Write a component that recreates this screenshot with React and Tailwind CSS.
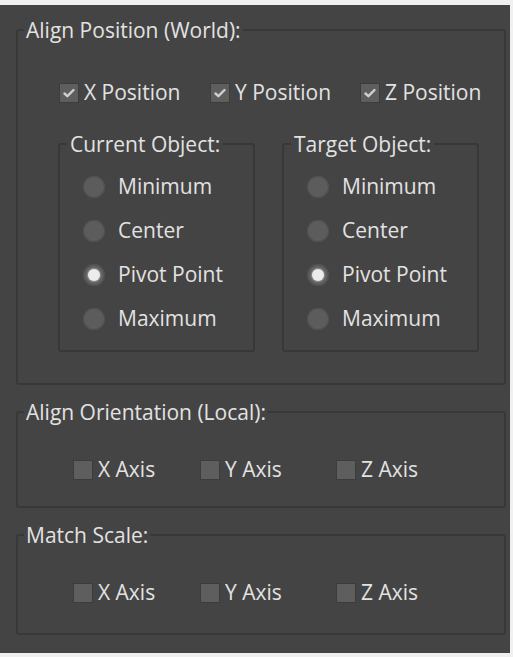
import React from "react";

function Check({ checked, label, className = "" }) {
  return (
    <div className={`flex items-center h-6 ${className}`}>
      <span className="flex h-5 w-5 items-center justify-center border border-[#3c3c3c] bg-[#5e5e5e]">
        {checked && (
          <svg width="14" height="12" viewBox="0 0 14 12">
            <path d="M2.5 6.5 L5.4 9.2 L11.5 3" fill="none" stroke="#cfcfcf" strokeWidth="2.4" strokeLinecap="round" strokeLinejoin="round" />
          </svg>
        )}
      </span>
      <span className="ml-[5px]">{label}</span>
    </div>
  );
}

function Radio({ on, label }) {
  return (
    <div className="flex items-center h-6">
      <span className="flex h-[22px] w-[22px] items-center justify-center rounded-full bg-[#5c5c5c] shadow-[inset_0_0_0_1px_#505050]">
        {on && <span className="h-3 w-3 rounded-full bg-[#ececec] shadow-[0_0_2px_1px_#9a9a9a]" />}
      </span>
      <span className="ml-[13px]">{label}</span>
    </div>
  );
}

function SubGroup({ title, className = "" }) {
  const items = ["Minimum", "Center", "Pivot Point", "Maximum"];
  return (
    <fieldset className={`m-0 w-[197px] rounded-[3px] border-2 border-[#383838] p-0 ${className}`}>
      <legend className="ml-[7px] px-[3px] leading-6">{title}</legend>
      <div className="flex flex-col gap-5 pl-[23px] pt-[19px] pb-[19px]">
        {items.map((t) => (
          <Radio key={t} label={t} on={t === "Pivot Point"} />
        ))}
      </div>
    </fieldset>
  );
}

function AxisGroup({ title, className = "", pb = "pb-[24px]" }) {
  return (
    <fieldset className={`m-0 ml-4 w-[490px] rounded-[3px] border-2 border-[#383838] p-0 ${className}`}>
      <legend className="ml-[6px] px-[2px] leading-6">{title}</legend>
      <div className={`flex pl-[55px] pt-[34px] ${pb}`}>
        <Check label="X Axis" className="w-[127px]" />
        <Check label="Y Axis" className="w-[136px]" />
        <Check label="Z Axis" />
      </div>
    </fieldset>
  );
}

export default function App() {
  return (
    <div className="h-[657px] w-[513px] bg-[#f0f0f0] pt-[5px]" style={{ fontFamily: '"Open Sans", "Noto Sans", sans-serif' }}>
      <div className="h-[648px] w-[510px] bg-[#444444] pt-[13px] text-[21px] text-[#e2e2e2]">
        <fieldset className="m-0 ml-4 w-[490px] rounded-[3px] border-2 border-[#383838] p-0">
          <legend className="ml-[6px] px-[2px] leading-6">Align Position (World):</legend>
          <div className="flex pl-[41px] pt-[39px]">
            <Check checked label="X Position" className="w-[151px]" />
            <Check checked label="Y Position" className="w-[150px]" />
            <Check checked label="Z Position" />
          </div>
          <div className="flex gap-[27px] pl-[40px] pt-[27px] pb-[31px]">
            <SubGroup title="Current Object:" />
            <SubGroup title="Target Object:" className="w-[196px]" />
          </div>
        </fieldset>
        <AxisGroup title="Align Orientation (Local):" className="mt-[15px]" />
        <AxisGroup title="Match Scale:" className="mt-[15px]" pb="pb-[28px]" />
      </div>
    </div>
  );
}
